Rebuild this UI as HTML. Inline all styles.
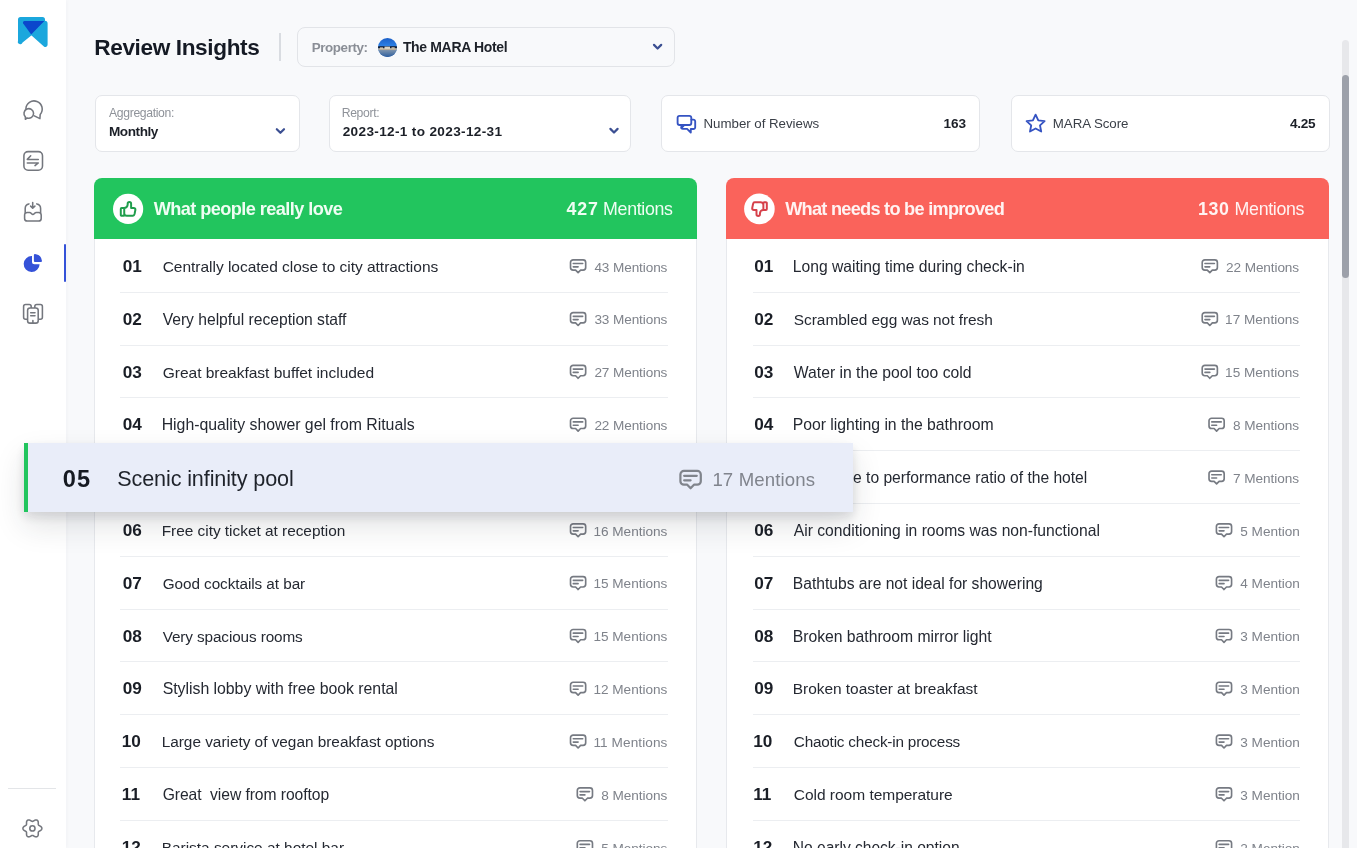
<!DOCTYPE html>
<html><head><meta charset="utf-8"><title>Review Insights</title>
<style>
html,body{margin:0;padding:0;}
body{width:1357px;height:848px;overflow:hidden;position:relative;background:#f8f9fb;font-family:"Liberation Sans", sans-serif;}
.t{position:absolute;white-space:nowrap;}
.ov{position:absolute;left:0;top:0;}
.lay{position:absolute;left:0;top:0;width:1357px;height:848px;will-change:transform;}
.box{position:absolute;box-sizing:border-box;border:1px solid #e4e6ea;border-radius:8px;background:#fff;}
.sep{position:absolute;height:1px;background:#eceef1;}
</style></head><body>
<div style="position:absolute;left:0;top:0;width:66px;height:848px;background:#fff;box-shadow:1px 0 4px rgba(20,30,60,0.03);"></div>
<div style="position:absolute;left:64px;top:244px;width:2px;height:38px;background:#3552d8;border-radius:1px;"></div>
<div style="position:absolute;left:8px;top:787.6px;width:48px;height:1px;background:#e3e5e8;"></div>

<div style="position:absolute;left:279px;top:33px;width:2px;height:28px;background:#d9dce1;"></div>
<div class="box" style="left:297px;top:27.2px;width:378.2px;height:39.4px;background:#f8f9fb;border-color:#e2e4e8;"></div>
<svg style="position:absolute;left:378px;top:37.5px" width="19" height="19" viewBox="0 0 19 19"><defs><clipPath id="av"><circle cx="9.5" cy="9.5" r="9.5"/></clipPath><linearGradient id="sky" x1="0" y1="0" x2="0" y2="1"><stop offset="0" stop-color="#1b5fc8"/><stop offset="0.5" stop-color="#2f86ea"/><stop offset="1" stop-color="#1a56b8"/></linearGradient><linearGradient id="sea" x1="0" y1="0" x2="0" y2="1"><stop offset="0" stop-color="#7d93ad"/><stop offset="1" stop-color="#2d5e9e"/></linearGradient></defs><g clip-path="url(#av)"><rect width="19" height="19" fill="url(#sky)"/><rect y="8.2" width="19" height="2.2" fill="#14213a"/><rect y="10.2" width="19" height="1.8" fill="#b9ad9a"/><rect x="6.5" y="8.6" width="5.5" height="2.4" fill="#d8d2c4"/><rect x="2" y="9.4" width="3" height="1.6" fill="#cfc3ad"/><rect x="13.5" y="9.2" width="3.2" height="1.8" fill="#c8bca6"/><rect y="12" width="19" height="7" fill="url(#sea)"/></g></svg>

<div class="box" style="left:94.6px;top:95.0px;width:205.0px;height:56.9px;border-radius:7px;"></div>
<div class="box" style="left:328.7px;top:95.0px;width:302.6px;height:56.9px;border-radius:7px;"></div>
<div class="box" style="left:661.2px;top:95.0px;width:318.8px;height:56.7px;border-radius:7px;"></div>
<div class="box" style="left:1010.9px;top:95.0px;width:319.6px;height:56.7px;border-radius:7px;"></div>

<div class="box" style="left:94px;top:220px;width:603px;height:700px;border-color:#e7e9ed;border-top:none;border-radius:0;"></div>
<div style="position:absolute;left:94px;top:178px;width:603px;height:60.7px;background:#22c55e;border-radius:8px 8px 0 0;"></div>
<div class="box" style="left:726px;top:220px;width:602.6px;height:700px;border-color:#e7e9ed;border-top:none;border-radius:0;"></div>
<div style="position:absolute;left:726px;top:178px;width:602.6px;height:60.5px;background:#fa635b;border-radius:8px 8px 0 0;"></div>

<div class="sep" style="left:120.2px;top:291.80px;width:548.3px"></div>
<div class="sep" style="left:753.3px;top:291.80px;width:547.2px"></div>
<div class="sep" style="left:120.2px;top:344.61px;width:548.3px"></div>
<div class="sep" style="left:753.3px;top:344.61px;width:547.2px"></div>
<div class="sep" style="left:120.2px;top:397.42px;width:548.3px"></div>
<div class="sep" style="left:753.3px;top:397.42px;width:547.2px"></div>
<div class="sep" style="left:120.2px;top:450.23px;width:548.3px"></div>
<div class="sep" style="left:753.3px;top:450.23px;width:547.2px"></div>
<div class="sep" style="left:120.2px;top:503.04px;width:548.3px"></div>
<div class="sep" style="left:753.3px;top:503.04px;width:547.2px"></div>
<div class="sep" style="left:120.2px;top:555.85px;width:548.3px"></div>
<div class="sep" style="left:753.3px;top:555.85px;width:547.2px"></div>
<div class="sep" style="left:120.2px;top:608.66px;width:548.3px"></div>
<div class="sep" style="left:753.3px;top:608.66px;width:547.2px"></div>
<div class="sep" style="left:120.2px;top:661.47px;width:548.3px"></div>
<div class="sep" style="left:753.3px;top:661.47px;width:547.2px"></div>
<div class="sep" style="left:120.2px;top:714.28px;width:548.3px"></div>
<div class="sep" style="left:753.3px;top:714.28px;width:547.2px"></div>
<div class="sep" style="left:120.2px;top:767.09px;width:548.3px"></div>
<div class="sep" style="left:753.3px;top:767.09px;width:547.2px"></div>
<div class="sep" style="left:120.2px;top:819.90px;width:548.3px"></div>
<div class="sep" style="left:753.3px;top:819.90px;width:547.2px"></div>
<svg class="ov" width="1357" height="848" viewBox="0 0 1357 848">
<g>
 <path d="M20.5 17H42.5A2.5 2.5 0 0 1 45 19.5V21L31.6 35.2L22.6 42.6A2.4 2.4 0 0 1 18 41V19.5A2.5 2.5 0 0 1 20.5 17Z" fill="#1ba7dd"/>
 <path d="M44.5 20.8A2.6 2.6 0 0 1 47.6 23.4V44.6A2.2 2.2 0 0 1 43.9 46.4L31.0 35.0Z" fill="#1ba7dd"/>
 <path d="M24.4 21.1H44.4L31.2 34.4L23.2 23.4A1.5 1.5 0 0 1 24.4 21.1Z" fill="#0b47cc"/>
</g>

<g fill="none" stroke="#74777e" stroke-width="1.55" stroke-linecap="round" stroke-linejoin="round">
 <path d="M25.9 109.0A8.15 8.15 0 1 1 40.2 114.4L39.9 118.6L34.3 115.9"/>
 <path d="M25.36 116.84A4.8 4.8 0 1 1 27.1 117.96L25.4 119.3Z"/>
 <rect x="23.9" y="151.6" width="18.6" height="18.6" rx="4.2"/>
 <path d="M38.3 159.4H27.3L30.7 155.8M27.3 162.9H38.3L35.0 165.6"/>
 <path d="M28.9 203.9C26.5 204.3 25.2 206 25.2 208.4V212.4M36.8 203.9C39.2 204.3 40.6 206 40.6 208.4V212.4"/>
 <path d="M32.7 202.6V208.0M30.6 206.1L32.7 208.2L34.9 206.1"/>
 <path d="M24.6 215.0A2.6 2.6 0 0 1 27.2 212.4H29.6C31.2 212.4 31.5 214.4 32.9 214.4C34.3 214.4 34.6 212.4 36.2 212.4H38.6A2.6 2.6 0 0 1 41.2 215.0V218.4A2.6 2.6 0 0 1 38.6 221.0H27.2A2.6 2.6 0 0 1 24.6 218.4Z"/>
 <rect x="23.6" y="304.4" width="7.6" height="14.8" rx="2"/>
 <rect x="34.8" y="304.4" width="7.6" height="14.8" rx="2"/>
 <rect x="27.6" y="307.9" width="10.6" height="15.2" rx="2.4" fill="#fff"/>
 <path d="M30.7 312.7H35.0M30.7 315.8H35.0M32.9 320.6V323.0"/>
 <path d="M41.85 828.40 L41.84 828.56 L41.83 828.73 L41.80 828.89 L41.75 829.05 L41.69 829.21 L41.61 829.37 L41.53 829.52 L41.42 829.67 L41.31 829.81 L41.18 829.95 L41.04 830.08 L40.90 830.21 L40.75 830.33 L40.59 830.44 L40.42 830.55 L40.26 830.65 L40.09 830.75 L39.93 830.85 L39.76 830.93 L39.60 831.02 L39.45 831.11 L39.30 831.19 L39.16 831.27 L39.03 831.35 L38.91 831.43 L38.80 831.52 L38.70 831.61 L38.61 831.70 L38.53 831.80 L38.46 831.90 L38.41 832.01 L38.36 832.13 L38.33 832.25 L38.30 832.38 L38.28 832.52 L38.27 832.67 L38.27 832.82 L38.26 832.98 L38.27 833.15 L38.27 833.33 L38.28 833.51 L38.28 833.69 L38.28 833.89 L38.28 834.08 L38.27 834.27 L38.26 834.47 L38.24 834.66 L38.21 834.86 L38.18 835.05 L38.13 835.23 L38.08 835.41 L38.01 835.58 L37.93 835.74 L37.85 835.90 L37.75 836.04 L37.64 836.17 L37.52 836.29 L37.40 836.40 L37.27 836.50 L37.12 836.58 L36.98 836.66 L36.83 836.73 L36.67 836.78 L36.51 836.82 L36.34 836.85 L36.17 836.86 L35.99 836.86 L35.81 836.85 L35.63 836.82 L35.45 836.78 L35.27 836.73 L35.09 836.66 L34.90 836.59 L34.73 836.51 L34.55 836.42 L34.38 836.33 L34.21 836.24 L34.05 836.14 L33.89 836.04 L33.73 835.95 L33.58 835.86 L33.44 835.77 L33.29 835.69 L33.16 835.62 L33.03 835.55 L32.90 835.50 L32.77 835.46 L32.65 835.43 L32.52 835.41 L32.40 835.40 L32.28 835.41 L32.15 835.43 L32.03 835.46 L31.90 835.50 L31.77 835.55 L31.64 835.62 L31.51 835.69 L31.36 835.77 L31.22 835.86 L31.07 835.95 L30.91 836.04 L30.75 836.14 L30.59 836.24 L30.42 836.33 L30.25 836.42 L30.07 836.51 L29.90 836.59 L29.71 836.66 L29.53 836.73 L29.35 836.78 L29.17 836.82 L28.99 836.85 L28.81 836.86 L28.63 836.86 L28.46 836.85 L28.29 836.82 L28.13 836.78 L27.97 836.73 L27.82 836.66 L27.68 836.58 L27.53 836.50 L27.40 836.40 L27.28 836.29 L27.16 836.17 L27.05 836.04 L26.95 835.90 L26.87 835.74 L26.79 835.58 L26.72 835.41 L26.67 835.23 L26.62 835.05 L26.59 834.86 L26.56 834.66 L26.54 834.47 L26.53 834.27 L26.52 834.08 L26.52 833.89 L26.52 833.69 L26.52 833.51 L26.53 833.33 L26.53 833.15 L26.54 832.98 L26.53 832.82 L26.53 832.67 L26.52 832.52 L26.50 832.38 L26.47 832.25 L26.44 832.13 L26.39 832.01 L26.34 831.90 L26.27 831.80 L26.19 831.70 L26.10 831.61 L26.00 831.52 L25.89 831.43 L25.77 831.35 L25.64 831.27 L25.50 831.19 L25.35 831.11 L25.20 831.02 L25.04 830.93 L24.87 830.85 L24.71 830.75 L24.54 830.65 L24.38 830.55 L24.21 830.44 L24.05 830.33 L23.90 830.21 L23.76 830.08 L23.62 829.95 L23.49 829.81 L23.38 829.67 L23.27 829.52 L23.19 829.37 L23.11 829.21 L23.05 829.05 L23.00 828.89 L22.97 828.73 L22.96 828.56 L22.95 828.40 L22.96 828.24 L22.97 828.07 L23.00 827.91 L23.05 827.75 L23.11 827.59 L23.19 827.43 L23.27 827.28 L23.38 827.13 L23.49 826.99 L23.62 826.85 L23.76 826.72 L23.90 826.59 L24.05 826.47 L24.21 826.36 L24.38 826.25 L24.54 826.15 L24.71 826.05 L24.87 825.95 L25.04 825.87 L25.20 825.78 L25.35 825.69 L25.50 825.61 L25.64 825.53 L25.77 825.45 L25.89 825.37 L26.00 825.28 L26.10 825.19 L26.19 825.10 L26.27 825.00 L26.34 824.90 L26.39 824.79 L26.44 824.67 L26.47 824.55 L26.50 824.42 L26.52 824.28 L26.53 824.13 L26.53 823.98 L26.54 823.82 L26.53 823.65 L26.53 823.47 L26.52 823.29 L26.52 823.11 L26.52 822.91 L26.52 822.72 L26.53 822.53 L26.54 822.33 L26.56 822.14 L26.59 821.94 L26.62 821.75 L26.67 821.57 L26.72 821.39 L26.79 821.22 L26.87 821.06 L26.95 820.90 L27.05 820.76 L27.16 820.63 L27.28 820.51 L27.40 820.40 L27.53 820.30 L27.67 820.22 L27.82 820.14 L27.97 820.07 L28.13 820.02 L28.29 819.98 L28.46 819.95 L28.63 819.94 L28.81 819.94 L28.99 819.95 L29.17 819.98 L29.35 820.02 L29.53 820.07 L29.71 820.14 L29.90 820.21 L30.07 820.29 L30.25 820.38 L30.42 820.47 L30.59 820.56 L30.75 820.66 L30.91 820.76 L31.07 820.85 L31.22 820.94 L31.36 821.03 L31.51 821.11 L31.64 821.18 L31.77 821.25 L31.90 821.30 L32.03 821.34 L32.15 821.37 L32.28 821.39 L32.40 821.40 L32.52 821.39 L32.65 821.37 L32.77 821.34 L32.90 821.30 L33.03 821.25 L33.16 821.18 L33.29 821.11 L33.44 821.03 L33.58 820.94 L33.73 820.85 L33.89 820.76 L34.05 820.66 L34.21 820.56 L34.38 820.47 L34.55 820.38 L34.73 820.29 L34.90 820.21 L35.09 820.14 L35.27 820.07 L35.45 820.02 L35.63 819.98 L35.81 819.95 L35.99 819.94 L36.17 819.94 L36.34 819.95 L36.51 819.98 L36.67 820.02 L36.83 820.07 L36.98 820.14 L37.12 820.22 L37.27 820.30 L37.40 820.40 L37.52 820.51 L37.64 820.63 L37.75 820.76 L37.85 820.90 L37.93 821.06 L38.01 821.22 L38.08 821.39 L38.13 821.57 L38.18 821.75 L38.21 821.94 L38.24 822.14 L38.26 822.33 L38.27 822.53 L38.28 822.72 L38.28 822.91 L38.28 823.11 L38.28 823.29 L38.27 823.47 L38.27 823.65 L38.26 823.82 L38.27 823.98 L38.27 824.13 L38.28 824.28 L38.30 824.42 L38.33 824.55 L38.36 824.67 L38.41 824.79 L38.46 824.90 L38.53 825.00 L38.61 825.10 L38.70 825.19 L38.80 825.28 L38.91 825.37 L39.03 825.45 L39.16 825.53 L39.30 825.61 L39.45 825.69 L39.60 825.78 L39.76 825.87 L39.93 825.95 L40.09 826.05 L40.26 826.15 L40.42 826.25 L40.59 826.36 L40.75 826.47 L40.90 826.59 L41.04 826.72 L41.18 826.85 L41.31 826.99 L41.42 827.13 L41.53 827.28 L41.61 827.43 L41.69 827.59 L41.75 827.75 L41.80 827.91 L41.83 828.07 L41.84 828.24Z"/>
 <circle cx="32.4" cy="828.4" r="2.6"/>
</g>
<g fill="#3552d8">
 <path d="M32.0 256.1A7.95 7.95 0 1 0 39.6 264.2H34.5A2.5 2.5 0 0 1 32.0 261.7Z"/>
 <path d="M33.9 255.0A1.1 1.1 0 0 1 35.0 253.9A8.1 8.1 0 0 1 42.0 260.9A1.1 1.1 0 0 1 40.9 262.0H34.9A1 1 0 0 1 33.9 261.0Z"/>
</g>

<g fill="none" stroke="#3553c2" stroke-width="1.85" stroke-linecap="round" stroke-linejoin="round">
 <path d="M684.2 125.0H679.6A2 2 0 0 1 677.6 123.0V117.8A2 2 0 0 1 679.6 115.8H689.3A2 2 0 0 1 691.3 117.8V123.0A2 2 0 0 1 689.3 125.0H684.2L681.4 128.0V125.2"/>
 <path d="M691.4 119.6H693.4A1.8 1.8 0 0 1 695.2 121.4V127.2A1.8 1.8 0 0 1 693.4 129.0H690.8V132.6L687.1 128.9H682.6A1.2 1.2 0 0 1 681.4 127.7"/>
 <path d="M1035.6 114.6L1038.3 120.3L1044.6 121.1L1040.0 125.4L1041.2 131.5L1035.6 128.5L1030.0 131.5L1031.2 125.4L1026.6 121.1L1032.9 120.3Z"/>
</g>
<g fill="none" stroke="#3b4f92" stroke-width="2.2" stroke-linecap="round" stroke-linejoin="round">
 <path d="M654.0 44.9L657.6 48.5L661.2 44.9"/>
 <path d="M276.8 129.2L280.4 132.8L284.0 129.2"/>
 <path d="M610.4 128.9L614.0 132.5L617.6 128.9"/>
</g>

<circle cx="128.1" cy="208.9" r="15.1" fill="#fff"/>
<g transform="translate(128.1 208.9) scale(0.86) translate(-11.5 -12)"><path d="M7 11v8a1 1 0 0 1 -1 1h-2a1 1 0 0 1 -1 -1v-7a1 1 0 0 1 1 -1h3a4 4 0 0 0 4 -4v-1a2 2 0 0 1 4 0v5h3a2 2 0 0 1 2 2l-1 5a2 3 0 0 1 -2 2h-7a3 3 0 0 1 -3 -3" fill="none" stroke="#1f9d4c" stroke-width="2.3" stroke-linecap="round" stroke-linejoin="round"/></g>
<circle cx="759.4" cy="208.9" r="15.3" fill="#fff"/>
<g transform="translate(759.5 209.1) rotate(180) scale(0.86) translate(-11.5 -12)"><path d="M7 11v8a1 1 0 0 1 -1 1h-2a1 1 0 0 1 -1 -1v-7a1 1 0 0 1 1 -1h3a4 4 0 0 0 4 -4v-1a2 2 0 0 1 4 0v5h3a2 2 0 0 1 2 2l-1 5a2 3 0 0 1 -2 2h-7a3 3 0 0 1 -3 -3" fill="none" stroke="#d6404a" stroke-width="2.3" stroke-linecap="round" stroke-linejoin="round"/></g>
<g transform="translate(569.70 259.00) scale(1.0)"><path d="M3.42 0.82H13.38A2.6 2.6 0 0 1 15.98 3.42V8.50A2.6 2.6 0 0 1 13.38 11.10H10.90L8.40 13.68L5.90 11.10H3.42A2.6 2.6 0 0 1 0.82 8.50V3.42A2.6 2.6 0 0 1 3.42 0.82ZM3.6 4.5H13.0M3.6 7.8H8.4" fill="none" stroke="#767a82" stroke-width="1.65" stroke-linecap="round" stroke-linejoin="round"/></g><g transform="translate(569.70 311.81) scale(1.0)"><path d="M3.42 0.82H13.38A2.6 2.6 0 0 1 15.98 3.42V8.50A2.6 2.6 0 0 1 13.38 11.10H10.90L8.40 13.68L5.90 11.10H3.42A2.6 2.6 0 0 1 0.82 8.50V3.42A2.6 2.6 0 0 1 3.42 0.82ZM3.6 4.5H13.0M3.6 7.8H8.4" fill="none" stroke="#767a82" stroke-width="1.65" stroke-linecap="round" stroke-linejoin="round"/></g><g transform="translate(569.70 364.62) scale(1.0)"><path d="M3.42 0.82H13.38A2.6 2.6 0 0 1 15.98 3.42V8.50A2.6 2.6 0 0 1 13.38 11.10H10.90L8.40 13.68L5.90 11.10H3.42A2.6 2.6 0 0 1 0.82 8.50V3.42A2.6 2.6 0 0 1 3.42 0.82ZM3.6 4.5H13.0M3.6 7.8H8.4" fill="none" stroke="#767a82" stroke-width="1.65" stroke-linecap="round" stroke-linejoin="round"/></g><g transform="translate(569.70 417.43) scale(1.0)"><path d="M3.42 0.82H13.38A2.6 2.6 0 0 1 15.98 3.42V8.50A2.6 2.6 0 0 1 13.38 11.10H10.90L8.40 13.68L5.90 11.10H3.42A2.6 2.6 0 0 1 0.82 8.50V3.42A2.6 2.6 0 0 1 3.42 0.82ZM3.6 4.5H13.0M3.6 7.8H8.4" fill="none" stroke="#767a82" stroke-width="1.65" stroke-linecap="round" stroke-linejoin="round"/></g><g transform="translate(569.70 523.05) scale(1.0)"><path d="M3.42 0.82H13.38A2.6 2.6 0 0 1 15.98 3.42V8.50A2.6 2.6 0 0 1 13.38 11.10H10.90L8.40 13.68L5.90 11.10H3.42A2.6 2.6 0 0 1 0.82 8.50V3.42A2.6 2.6 0 0 1 3.42 0.82ZM3.6 4.5H13.0M3.6 7.8H8.4" fill="none" stroke="#767a82" stroke-width="1.65" stroke-linecap="round" stroke-linejoin="round"/></g><g transform="translate(569.70 575.86) scale(1.0)"><path d="M3.42 0.82H13.38A2.6 2.6 0 0 1 15.98 3.42V8.50A2.6 2.6 0 0 1 13.38 11.10H10.90L8.40 13.68L5.90 11.10H3.42A2.6 2.6 0 0 1 0.82 8.50V3.42A2.6 2.6 0 0 1 3.42 0.82ZM3.6 4.5H13.0M3.6 7.8H8.4" fill="none" stroke="#767a82" stroke-width="1.65" stroke-linecap="round" stroke-linejoin="round"/></g><g transform="translate(569.70 628.67) scale(1.0)"><path d="M3.42 0.82H13.38A2.6 2.6 0 0 1 15.98 3.42V8.50A2.6 2.6 0 0 1 13.38 11.10H10.90L8.40 13.68L5.90 11.10H3.42A2.6 2.6 0 0 1 0.82 8.50V3.42A2.6 2.6 0 0 1 3.42 0.82ZM3.6 4.5H13.0M3.6 7.8H8.4" fill="none" stroke="#767a82" stroke-width="1.65" stroke-linecap="round" stroke-linejoin="round"/></g><g transform="translate(569.70 681.48) scale(1.0)"><path d="M3.42 0.82H13.38A2.6 2.6 0 0 1 15.98 3.42V8.50A2.6 2.6 0 0 1 13.38 11.10H10.90L8.40 13.68L5.90 11.10H3.42A2.6 2.6 0 0 1 0.82 8.50V3.42A2.6 2.6 0 0 1 3.42 0.82ZM3.6 4.5H13.0M3.6 7.8H8.4" fill="none" stroke="#767a82" stroke-width="1.65" stroke-linecap="round" stroke-linejoin="round"/></g><g transform="translate(569.70 734.29) scale(1.0)"><path d="M3.42 0.82H13.38A2.6 2.6 0 0 1 15.98 3.42V8.50A2.6 2.6 0 0 1 13.38 11.10H10.90L8.40 13.68L5.90 11.10H3.42A2.6 2.6 0 0 1 0.82 8.50V3.42A2.6 2.6 0 0 1 3.42 0.82ZM3.6 4.5H13.0M3.6 7.8H8.4" fill="none" stroke="#767a82" stroke-width="1.65" stroke-linecap="round" stroke-linejoin="round"/></g><g transform="translate(576.50 787.10) scale(1.0)"><path d="M3.42 0.82H13.38A2.6 2.6 0 0 1 15.98 3.42V8.50A2.6 2.6 0 0 1 13.38 11.10H10.90L8.40 13.68L5.90 11.10H3.42A2.6 2.6 0 0 1 0.82 8.50V3.42A2.6 2.6 0 0 1 3.42 0.82ZM3.6 4.5H13.0M3.6 7.8H8.4" fill="none" stroke="#767a82" stroke-width="1.65" stroke-linecap="round" stroke-linejoin="round"/></g><g transform="translate(576.50 839.91) scale(1.0)"><path d="M3.42 0.82H13.38A2.6 2.6 0 0 1 15.98 3.42V8.50A2.6 2.6 0 0 1 13.38 11.10H10.90L8.40 13.68L5.90 11.10H3.42A2.6 2.6 0 0 1 0.82 8.50V3.42A2.6 2.6 0 0 1 3.42 0.82ZM3.6 4.5H13.0M3.6 7.8H8.4" fill="none" stroke="#767a82" stroke-width="1.65" stroke-linecap="round" stroke-linejoin="round"/></g><g transform="translate(1201.40 259.00) scale(1.0)"><path d="M3.42 0.82H13.38A2.6 2.6 0 0 1 15.98 3.42V8.50A2.6 2.6 0 0 1 13.38 11.10H10.90L8.40 13.68L5.90 11.10H3.42A2.6 2.6 0 0 1 0.82 8.50V3.42A2.6 2.6 0 0 1 3.42 0.82ZM3.6 4.5H13.0M3.6 7.8H8.4" fill="none" stroke="#767a82" stroke-width="1.65" stroke-linecap="round" stroke-linejoin="round"/></g><g transform="translate(1201.40 311.81) scale(1.0)"><path d="M3.42 0.82H13.38A2.6 2.6 0 0 1 15.98 3.42V8.50A2.6 2.6 0 0 1 13.38 11.10H10.90L8.40 13.68L5.90 11.10H3.42A2.6 2.6 0 0 1 0.82 8.50V3.42A2.6 2.6 0 0 1 3.42 0.82ZM3.6 4.5H13.0M3.6 7.8H8.4" fill="none" stroke="#767a82" stroke-width="1.65" stroke-linecap="round" stroke-linejoin="round"/></g><g transform="translate(1201.40 364.62) scale(1.0)"><path d="M3.42 0.82H13.38A2.6 2.6 0 0 1 15.98 3.42V8.50A2.6 2.6 0 0 1 13.38 11.10H10.90L8.40 13.68L5.90 11.10H3.42A2.6 2.6 0 0 1 0.82 8.50V3.42A2.6 2.6 0 0 1 3.42 0.82ZM3.6 4.5H13.0M3.6 7.8H8.4" fill="none" stroke="#767a82" stroke-width="1.65" stroke-linecap="round" stroke-linejoin="round"/></g><g transform="translate(1208.20 417.43) scale(1.0)"><path d="M3.42 0.82H13.38A2.6 2.6 0 0 1 15.98 3.42V8.50A2.6 2.6 0 0 1 13.38 11.10H10.90L8.40 13.68L5.90 11.10H3.42A2.6 2.6 0 0 1 0.82 8.50V3.42A2.6 2.6 0 0 1 3.42 0.82ZM3.6 4.5H13.0M3.6 7.8H8.4" fill="none" stroke="#767a82" stroke-width="1.65" stroke-linecap="round" stroke-linejoin="round"/></g><g transform="translate(1208.20 470.24) scale(1.0)"><path d="M3.42 0.82H13.38A2.6 2.6 0 0 1 15.98 3.42V8.50A2.6 2.6 0 0 1 13.38 11.10H10.90L8.40 13.68L5.90 11.10H3.42A2.6 2.6 0 0 1 0.82 8.50V3.42A2.6 2.6 0 0 1 3.42 0.82ZM3.6 4.5H13.0M3.6 7.8H8.4" fill="none" stroke="#767a82" stroke-width="1.65" stroke-linecap="round" stroke-linejoin="round"/></g><g transform="translate(1215.60 523.05) scale(1.0)"><path d="M3.42 0.82H13.38A2.6 2.6 0 0 1 15.98 3.42V8.50A2.6 2.6 0 0 1 13.38 11.10H10.90L8.40 13.68L5.90 11.10H3.42A2.6 2.6 0 0 1 0.82 8.50V3.42A2.6 2.6 0 0 1 3.42 0.82ZM3.6 4.5H13.0M3.6 7.8H8.4" fill="none" stroke="#767a82" stroke-width="1.65" stroke-linecap="round" stroke-linejoin="round"/></g><g transform="translate(1215.60 575.86) scale(1.0)"><path d="M3.42 0.82H13.38A2.6 2.6 0 0 1 15.98 3.42V8.50A2.6 2.6 0 0 1 13.38 11.10H10.90L8.40 13.68L5.90 11.10H3.42A2.6 2.6 0 0 1 0.82 8.50V3.42A2.6 2.6 0 0 1 3.42 0.82ZM3.6 4.5H13.0M3.6 7.8H8.4" fill="none" stroke="#767a82" stroke-width="1.65" stroke-linecap="round" stroke-linejoin="round"/></g><g transform="translate(1215.60 628.67) scale(1.0)"><path d="M3.42 0.82H13.38A2.6 2.6 0 0 1 15.98 3.42V8.50A2.6 2.6 0 0 1 13.38 11.10H10.90L8.40 13.68L5.90 11.10H3.42A2.6 2.6 0 0 1 0.82 8.50V3.42A2.6 2.6 0 0 1 3.42 0.82ZM3.6 4.5H13.0M3.6 7.8H8.4" fill="none" stroke="#767a82" stroke-width="1.65" stroke-linecap="round" stroke-linejoin="round"/></g><g transform="translate(1215.60 681.48) scale(1.0)"><path d="M3.42 0.82H13.38A2.6 2.6 0 0 1 15.98 3.42V8.50A2.6 2.6 0 0 1 13.38 11.10H10.90L8.40 13.68L5.90 11.10H3.42A2.6 2.6 0 0 1 0.82 8.50V3.42A2.6 2.6 0 0 1 3.42 0.82ZM3.6 4.5H13.0M3.6 7.8H8.4" fill="none" stroke="#767a82" stroke-width="1.65" stroke-linecap="round" stroke-linejoin="round"/></g><g transform="translate(1215.60 734.29) scale(1.0)"><path d="M3.42 0.82H13.38A2.6 2.6 0 0 1 15.98 3.42V8.50A2.6 2.6 0 0 1 13.38 11.10H10.90L8.40 13.68L5.90 11.10H3.42A2.6 2.6 0 0 1 0.82 8.50V3.42A2.6 2.6 0 0 1 3.42 0.82ZM3.6 4.5H13.0M3.6 7.8H8.4" fill="none" stroke="#767a82" stroke-width="1.65" stroke-linecap="round" stroke-linejoin="round"/></g><g transform="translate(1215.60 787.10) scale(1.0)"><path d="M3.42 0.82H13.38A2.6 2.6 0 0 1 15.98 3.42V8.50A2.6 2.6 0 0 1 13.38 11.10H10.90L8.40 13.68L5.90 11.10H3.42A2.6 2.6 0 0 1 0.82 8.50V3.42A2.6 2.6 0 0 1 3.42 0.82ZM3.6 4.5H13.0M3.6 7.8H8.4" fill="none" stroke="#767a82" stroke-width="1.65" stroke-linecap="round" stroke-linejoin="round"/></g><g transform="translate(1215.60 839.91) scale(1.0)"><path d="M3.42 0.82H13.38A2.6 2.6 0 0 1 15.98 3.42V8.50A2.6 2.6 0 0 1 13.38 11.10H10.90L8.40 13.68L5.90 11.10H3.42A2.6 2.6 0 0 1 0.82 8.50V3.42A2.6 2.6 0 0 1 3.42 0.82ZM3.6 4.5H13.0M3.6 7.8H8.4" fill="none" stroke="#767a82" stroke-width="1.65" stroke-linecap="round" stroke-linejoin="round"/></g></svg>
<div class="lay">
<div class="t" style="left:94.30px;top:37.00px;font-size:22.6px;line-height:22.6px;color:#151a24;font-weight:700;letter-spacing:-0.378px;">Review Insights</div>
<div class="t" style="left:311.80px;top:41.00px;font-size:13.4px;line-height:13.4px;color:#8a8e96;font-weight:700;letter-spacing:-0.421px;">Property:</div>
<div class="t" style="left:402.90px;top:40.00px;font-size:14px;line-height:14px;color:#1d2129;font-weight:700;letter-spacing:-0.344px;">The MARA Hotel</div>
<div class="t" style="left:109.00px;top:107.00px;font-size:12.2px;line-height:12.2px;color:#8e9299;letter-spacing:-0.339px;">Aggregation:</div>
<div class="t" style="left:109.00px;top:125.00px;font-size:13.6px;line-height:13.6px;color:#1b1f27;font-weight:700;letter-spacing:-0.456px;">Monthly</div>
<div class="t" style="left:341.70px;top:107.00px;font-size:12.2px;line-height:12.2px;color:#8e9299;letter-spacing:-0.330px;">Report:</div>
<div class="t" style="left:342.70px;top:125.00px;font-size:13.6px;line-height:13.6px;color:#1b1f27;font-weight:700;letter-spacing:0.339px;">2023-12-1 to 2023-12-31</div>
<div class="t" style="left:703.50px;top:117.00px;font-size:13.3px;line-height:13.3px;color:#3a3f47;letter-spacing:-0.023px;">Number of Reviews</div>
<div class="t" style="left:943.60px;top:117.00px;font-size:13.6px;line-height:13.6px;color:#1b1f27;font-weight:700;letter-spacing:-0.160px;">163</div>
<div class="t" style="left:1052.80px;top:117.00px;font-size:13.3px;line-height:13.3px;color:#3a3f47;letter-spacing:-0.050px;">MARA Score</div>
<div class="t" style="left:1290.00px;top:117.00px;font-size:13.6px;line-height:13.6px;color:#1b1f27;font-weight:700;letter-spacing:-0.299px;">4.25</div>
<div class="t" style="left:153.70px;top:200.00px;font-size:18.2px;line-height:18.2px;color:#effdf3;font-weight:700;letter-spacing:-0.592px;">What people really love</div>
<div class="t" style="left:566.40px;top:201.00px;font-size:17.8px;line-height:17.8px;color:#effdf3;font-weight:700;letter-spacing:0.911px;">427</div>
<div class="t" style="left:603.10px;top:201.00px;font-size:17.8px;line-height:17.8px;color:#effdf3;letter-spacing:-0.323px;">Mentions</div>
<div class="t" style="left:785.20px;top:200.00px;font-size:18.2px;line-height:18.2px;color:#fff3f2;font-weight:700;letter-spacing:-0.744px;">What needs to be improved</div>
<div class="t" style="left:1198.10px;top:201.00px;font-size:17.8px;line-height:17.8px;color:#fff3f2;font-weight:700;letter-spacing:0.561px;">130</div>
<div class="t" style="left:1234.60px;top:201.00px;font-size:17.8px;line-height:17.8px;color:#fff3f2;letter-spacing:-0.323px;">Mentions</div>
<div class="t" style="left:122.80px;top:258.00px;font-size:17.2px;line-height:17.2px;color:#1a1e26;font-weight:700;">01</div>
<div class="t" style="left:162.70px;top:259.00px;font-size:15.53px;line-height:15.53px;color:#252932;letter-spacing:-0.030px;">Centrally located close to city attractions</div>
<div class="t" style="left:594.40px;top:261.00px;font-size:13.6px;line-height:13.6px;color:#7f838b;letter-spacing:-0.106px;">43 Mentions</div>
<div class="t" style="left:122.80px;top:311.00px;font-size:17.2px;line-height:17.2px;color:#1a1e26;font-weight:700;">02</div>
<div class="t" style="left:162.70px;top:312.00px;font-size:15.66px;line-height:15.66px;color:#252932;letter-spacing:-0.021px;">Very helpful reception staff</div>
<div class="t" style="left:594.40px;top:313.00px;font-size:13.6px;line-height:13.6px;color:#7f838b;letter-spacing:-0.106px;">33 Mentions</div>
<div class="t" style="left:122.80px;top:364.00px;font-size:17.2px;line-height:17.2px;color:#1a1e26;font-weight:700;">03</div>
<div class="t" style="left:162.70px;top:365.00px;font-size:15.56px;line-height:15.56px;color:#252932;letter-spacing:-0.029px;">Great breakfast buffet included</div>
<div class="t" style="left:594.40px;top:366.00px;font-size:13.6px;line-height:13.6px;color:#7f838b;letter-spacing:-0.106px;">27 Mentions</div>
<div class="t" style="left:122.80px;top:416.00px;font-size:17.2px;line-height:17.2px;color:#1a1e26;font-weight:700;">04</div>
<div class="t" style="left:161.70px;top:417.00px;font-size:15.85px;line-height:15.85px;color:#252932;letter-spacing:-0.019px;">High-quality shower gel from Rituals</div>
<div class="t" style="left:594.40px;top:419.00px;font-size:13.6px;line-height:13.6px;color:#7f838b;letter-spacing:-0.106px;">22 Mentions</div>
<div class="t" style="left:122.80px;top:522.00px;font-size:17.2px;line-height:17.2px;color:#1a1e26;font-weight:700;">06</div>
<div class="t" style="left:161.70px;top:523.00px;font-size:15.41px;line-height:15.41px;color:#252932;letter-spacing:-0.019px;">Free city ticket at reception</div>
<div class="t" style="left:593.40px;top:525.00px;font-size:13.6px;line-height:13.6px;color:#7f838b;letter-spacing:-0.006px;">16 Mentions</div>
<div class="t" style="left:122.80px;top:575.00px;font-size:17.2px;line-height:17.2px;color:#1a1e26;font-weight:700;">07</div>
<div class="t" style="left:162.70px;top:576.00px;font-size:15.3px;line-height:15.3px;color:#252932;letter-spacing:-0.060px;">Good cocktails at bar</div>
<div class="t" style="left:593.40px;top:577.00px;font-size:13.6px;line-height:13.6px;color:#7f838b;letter-spacing:-0.006px;">15 Mentions</div>
<div class="t" style="left:122.80px;top:628.00px;font-size:17.2px;line-height:17.2px;color:#1a1e26;font-weight:700;">08</div>
<div class="t" style="left:162.70px;top:629.00px;font-size:15.3px;line-height:15.3px;color:#252932;letter-spacing:-0.107px;">Very spacious rooms</div>
<div class="t" style="left:593.40px;top:630.00px;font-size:13.6px;line-height:13.6px;color:#7f838b;letter-spacing:-0.006px;">15 Mentions</div>
<div class="t" style="left:122.80px;top:680.00px;font-size:17.2px;line-height:17.2px;color:#1a1e26;font-weight:700;">09</div>
<div class="t" style="left:162.70px;top:681.00px;font-size:15.86px;line-height:15.86px;color:#252932;letter-spacing:-0.033px;">Stylish lobby with free book rental</div>
<div class="t" style="left:593.40px;top:683.00px;font-size:13.6px;line-height:13.6px;color:#7f838b;letter-spacing:-0.006px;">12 Mentions</div>
<div class="t" style="left:121.80px;top:733.00px;font-size:17.2px;line-height:17.2px;color:#1a1e26;font-weight:700;">10</div>
<div class="t" style="left:161.70px;top:734.00px;font-size:15.4px;line-height:15.4px;color:#252932;letter-spacing:-0.023px;">Large variety of vegan breakfast options</div>
<div class="t" style="left:593.40px;top:736.00px;font-size:13.6px;line-height:13.6px;color:#7f838b;letter-spacing:0.095px;">11 Mentions</div>
<div class="t" style="left:121.80px;top:786.00px;font-size:17.2px;line-height:17.2px;color:#1a1e26;font-weight:700;">11</div>
<div class="t" style="left:162.70px;top:787.00px;font-size:15.67px;line-height:15.67px;color:#252932;letter-spacing:-0.066px;">Great&nbsp; view from rooftop</div>
<div class="t" style="left:601.20px;top:789.00px;font-size:13.6px;line-height:13.6px;color:#7f838b;letter-spacing:-0.033px;">8 Mentions</div>
<div class="t" style="left:121.80px;top:839.00px;font-size:17.2px;line-height:17.2px;color:#1a1e26;font-weight:700;">12</div>
<div class="t" style="left:161.70px;top:840.00px;font-size:15.43px;line-height:15.43px;color:#252932;letter-spacing:-0.009px;">Barista service at hotel bar</div>
<div class="t" style="left:601.20px;top:842.00px;font-size:13.6px;line-height:13.6px;color:#7f838b;letter-spacing:-0.033px;">5 Mentions</div>
<div class="t" style="left:754.20px;top:258.00px;font-size:17.2px;line-height:17.2px;color:#1a1e26;font-weight:700;">01</div>
<div class="t" style="left:792.80px;top:259.00px;font-size:15.66px;line-height:15.66px;color:#252932;letter-spacing:-0.011px;">Long waiting time during check-in</div>
<div class="t" style="left:1226.10px;top:261.00px;font-size:13.6px;line-height:13.6px;color:#7f838b;letter-spacing:-0.106px;">22 Mentions</div>
<div class="t" style="left:754.20px;top:311.00px;font-size:17.2px;line-height:17.2px;color:#1a1e26;font-weight:700;">02</div>
<div class="t" style="left:793.80px;top:312.00px;font-size:15.44px;line-height:15.44px;color:#252932;letter-spacing:-0.033px;">Scrambled egg was not fresh</div>
<div class="t" style="left:1225.10px;top:313.00px;font-size:13.6px;line-height:13.6px;color:#7f838b;letter-spacing:-0.006px;">17 Mentions</div>
<div class="t" style="left:754.20px;top:364.00px;font-size:17.2px;line-height:17.2px;color:#1a1e26;font-weight:700;">03</div>
<div class="t" style="left:793.80px;top:365.00px;font-size:15.73px;line-height:15.73px;color:#252932;">Water in the pool too cold</div>
<div class="t" style="left:1225.10px;top:366.00px;font-size:13.6px;line-height:13.6px;color:#7f838b;letter-spacing:-0.006px;">15 Mentions</div>
<div class="t" style="left:754.20px;top:416.00px;font-size:17.2px;line-height:17.2px;color:#1a1e26;font-weight:700;">04</div>
<div class="t" style="left:792.80px;top:417.00px;font-size:15.79px;line-height:15.79px;color:#252932;letter-spacing:-0.037px;">Poor lighting in the bathroom</div>
<div class="t" style="left:1232.90px;top:419.00px;font-size:13.6px;line-height:13.6px;color:#7f838b;letter-spacing:-0.033px;">8 Mentions</div>
<div class="t" style="left:754.20px;top:469.00px;font-size:17.2px;line-height:17.2px;color:#1a1e26;font-weight:700;">05</div>
<div class="t" style="left:826.20px;top:470.00px;font-size:15.65px;line-height:15.65px;color:#252932;letter-spacing:-0.016px;">Price to performance ratio of the hotel</div>
<div class="t" style="left:1232.90px;top:472.00px;font-size:13.6px;line-height:13.6px;color:#7f838b;letter-spacing:-0.033px;">7 Mentions</div>
<div class="t" style="left:754.20px;top:522.00px;font-size:17.2px;line-height:17.2px;color:#1a1e26;font-weight:700;">06</div>
<div class="t" style="left:793.80px;top:523.00px;font-size:15.67px;line-height:15.67px;color:#252932;letter-spacing:-0.004px;">Air conditioning in rooms was non-functional</div>
<div class="t" style="left:1240.30px;top:525.00px;font-size:13.6px;line-height:13.6px;color:#7f838b;letter-spacing:-0.017px;">5 Mention</div>
<div class="t" style="left:754.20px;top:575.00px;font-size:17.2px;line-height:17.2px;color:#1a1e26;font-weight:700;">07</div>
<div class="t" style="left:792.80px;top:576.00px;font-size:15.64px;line-height:15.64px;color:#252932;letter-spacing:-0.005px;">Bathtubs are not ideal for showering</div>
<div class="t" style="left:1240.30px;top:577.00px;font-size:13.6px;line-height:13.6px;color:#7f838b;letter-spacing:-0.017px;">4 Mention</div>
<div class="t" style="left:754.20px;top:628.00px;font-size:17.2px;line-height:17.2px;color:#1a1e26;font-weight:700;">08</div>
<div class="t" style="left:792.80px;top:629.00px;font-size:15.75px;line-height:15.75px;color:#252932;letter-spacing:-0.030px;">Broken bathroom mirror light</div>
<div class="t" style="left:1240.30px;top:630.00px;font-size:13.6px;line-height:13.6px;color:#7f838b;letter-spacing:-0.017px;">3 Mention</div>
<div class="t" style="left:754.20px;top:680.00px;font-size:17.2px;line-height:17.2px;color:#1a1e26;font-weight:700;">09</div>
<div class="t" style="left:792.80px;top:681.00px;font-size:15.46px;line-height:15.46px;color:#252932;letter-spacing:-0.032px;">Broken toaster at breakfast</div>
<div class="t" style="left:1240.30px;top:683.00px;font-size:13.6px;line-height:13.6px;color:#7f838b;letter-spacing:-0.017px;">3 Mention</div>
<div class="t" style="left:753.20px;top:733.00px;font-size:17.2px;line-height:17.2px;color:#1a1e26;font-weight:700;">10</div>
<div class="t" style="left:793.80px;top:734.00px;font-size:15.3px;line-height:15.3px;color:#252932;letter-spacing:-0.193px;">Chaotic check-in process</div>
<div class="t" style="left:1240.30px;top:736.00px;font-size:13.6px;line-height:13.6px;color:#7f838b;letter-spacing:-0.017px;">3 Mention</div>
<div class="t" style="left:753.20px;top:786.00px;font-size:17.2px;line-height:17.2px;color:#1a1e26;font-weight:700;">11</div>
<div class="t" style="left:793.80px;top:787.00px;font-size:15.53px;line-height:15.53px;color:#252932;letter-spacing:-0.030px;">Cold room temperature</div>
<div class="t" style="left:1240.30px;top:789.00px;font-size:13.6px;line-height:13.6px;color:#7f838b;letter-spacing:-0.017px;">3 Mention</div>
<div class="t" style="left:753.20px;top:839.00px;font-size:17.2px;line-height:17.2px;color:#1a1e26;font-weight:700;">12</div>
<div class="t" style="left:792.80px;top:840.00px;font-size:15.59px;line-height:15.59px;color:#252932;letter-spacing:-0.015px;">No early check-in option</div>
<div class="t" style="left:1240.30px;top:842.00px;font-size:13.6px;line-height:13.6px;color:#7f838b;letter-spacing:-0.017px;">2 Mention</div>
</div>

<div style="position:absolute;left:24px;top:443px;width:828.5px;height:69.2px;background:#e9edf9;box-shadow:0 14px 30px rgba(30,35,50,0.13), 0 5px 10px rgba(30,35,50,0.12);"></div>
<div style="position:absolute;left:24px;top:443px;width:4px;height:69.2px;background:#22c55e;"></div>
<svg class="ov" width="1357" height="848" viewBox="0 0 1357 848"><g transform="translate(679.30 469.80) scale(1.3452380952380953)"><path d="M3.42 0.82H13.38A2.6 2.6 0 0 1 15.98 3.42V8.50A2.6 2.6 0 0 1 13.38 11.10H10.90L8.40 13.68L5.90 11.10H3.42A2.6 2.6 0 0 1 0.82 8.50V3.42A2.6 2.6 0 0 1 3.42 0.82ZM3.6 4.5H13.0M3.6 7.8H8.4" fill="none" stroke="#80848c" stroke-width="1.65" stroke-linecap="round" stroke-linejoin="round"/></g></svg>
<div class="lay">
<div class="t" style="left:62.70px;top:468.00px;font-size:23.6px;line-height:23.6px;color:#161a22;font-weight:700;letter-spacing:1.078px;">05</div>
<div class="t" style="left:117.30px;top:468.00px;font-size:21.6px;line-height:21.6px;color:#1f232b;letter-spacing:-0.129px;">Scenic infinity pool</div>
<div class="t" style="left:712.40px;top:471.00px;font-size:18.6px;line-height:18.6px;color:#80848d;letter-spacing:0.130px;">17 Mentions</div>
</div>

<div style="position:absolute;left:1341.7px;top:39.6px;width:7.8px;height:830px;background:#e7e8eb;border-radius:4px;"></div>
<div style="position:absolute;left:1341.7px;top:75px;width:7.8px;height:202.7px;background:#9da1aa;border-radius:4px;"></div>
</body></html>
